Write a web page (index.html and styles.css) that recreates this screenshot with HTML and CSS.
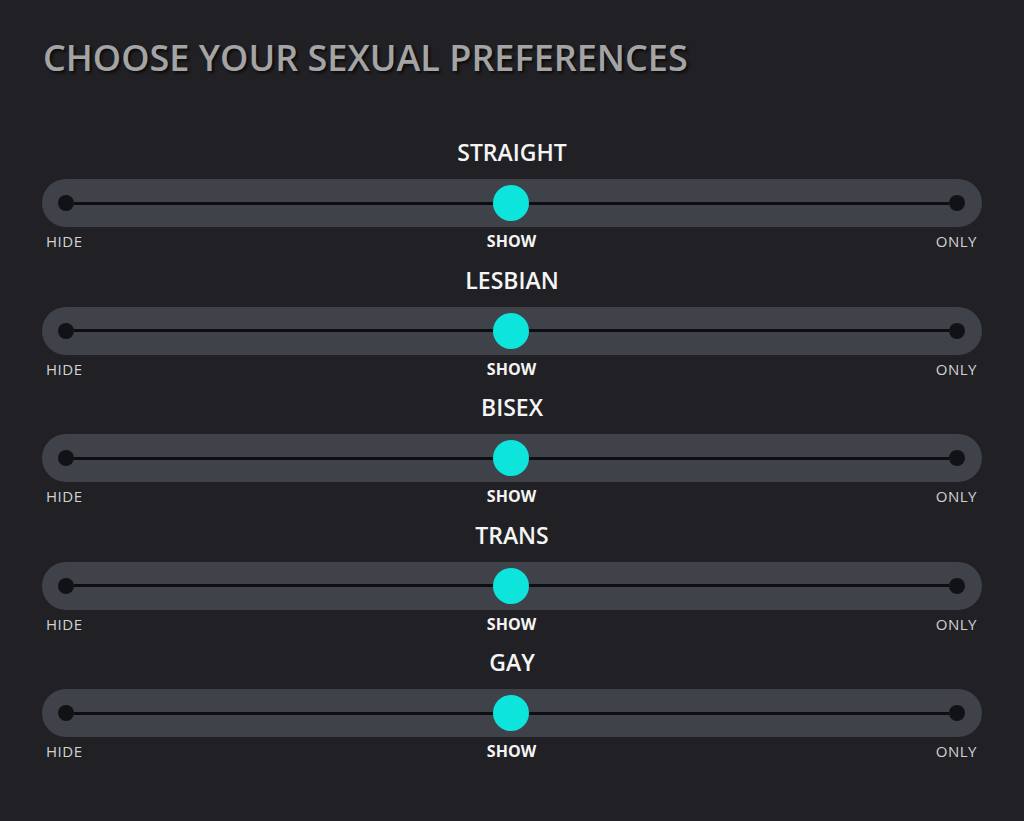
FILE: index.html
```html
<!DOCTYPE html>
<html lang="en">
<head>
    <meta charset="UTF-8">
    <title>Sexual Preferences</title>
    <link rel="stylesheet" href="styles.css">
</head>
<body>
    <div class="container">
        <h1>CHOOSE YOUR SEXUAL PREFERENCES</h1>

        <div class="pref">
            <div class="pref-title">STRAIGHT</div>
            <div class="track">
                <span class="dot"></span><span class="line"></span><span class="dot"></span>
                <span class="knob"></span>
            </div>
            <div class="marks"><span>HIDE</span><span class="active">SHOW</span><span class="last">ONLY</span></div>
        </div>

        <div class="pref">
            <div class="pref-title">LESBIAN</div>
            <div class="track">
                <span class="dot"></span><span class="line"></span><span class="dot"></span>
                <span class="knob"></span>
            </div>
            <div class="marks"><span>HIDE</span><span class="active">SHOW</span><span class="last">ONLY</span></div>
        </div>

        <div class="pref">
            <div class="pref-title">BISEX</div>
            <div class="track">
                <span class="dot"></span><span class="line"></span><span class="dot"></span>
                <span class="knob"></span>
            </div>
            <div class="marks"><span>HIDE</span><span class="active">SHOW</span><span class="last">ONLY</span></div>
        </div>

        <div class="pref">
            <div class="pref-title">TRANS</div>
            <div class="track">
                <span class="dot"></span><span class="line"></span><span class="dot"></span>
                <span class="knob"></span>
            </div>
            <div class="marks"><span>HIDE</span><span class="active">SHOW</span><span class="last">ONLY</span></div>
        </div>

        <div class="pref">
            <div class="pref-title">GAY</div>
            <div class="track">
                <span class="dot"></span><span class="line"></span><span class="dot"></span>
                <span class="knob"></span>
            </div>
            <div class="marks"><span>HIDE</span><span class="active">SHOW</span><span class="last">ONLY</span></div>
        </div>
    </div>
</body>
</html>
```

FILE: styles.css
```css
body {
    margin: 0;
    background-color: #212125;
    font-family: "Open Sans", sans-serif;
    color: #f2f2f2;
}

.container {
    width: 940px;
    padding: 38px 0 0 42px;
}

h1 {
    margin: 0 0 59px 1px;
    font-size: 36px;
    line-height: 40px;
    font-weight: 600;
    color: #a4a4a4;
    text-shadow: 2px 2px 3px rgba(0, 0, 0, 0.7);
}

.pref {
    display: flex;
    flex-direction: column;
    margin-bottom: 9.5px;
}

.pref-title {
    text-align: center;
    font-size: 23px;
    line-height: 30px;
    font-weight: 600;
    color: #f5f5f5;
    margin-bottom: 12px;
}

.track {
    position: relative;
    display: flex;
    align-items: center;
    height: 48px;
    padding: 0 17px 0 16px;
    border-radius: 24px;
    background-color: #404249;
}

.dot {
    width: 16px;
    height: 16px;
    border-radius: 50%;
    background-color: #111216;
}

.line {
    flex: 1;
    height: 3px;
    background-color: #0d0e11;
}

.knob {
    position: absolute;
    left: 451px;
    top: 6px;
    width: 36px;
    height: 36px;
    border-radius: 50%;
    background-color: #0de5dc;
}

.marks {
    display: grid;
    grid-template-columns: 1fr auto 1fr;
    padding: 0 5px 0 4px;
    font-size: 15px;
    line-height: 28px;
    color: #d2d2d2;
    letter-spacing: 0.5px;
}

.marks .active {
    font-size: 16px;
    font-weight: 700;
    color: #f5f5f5;
    letter-spacing: 0;
}

.marks .last {
    text-align: right;
}
```
